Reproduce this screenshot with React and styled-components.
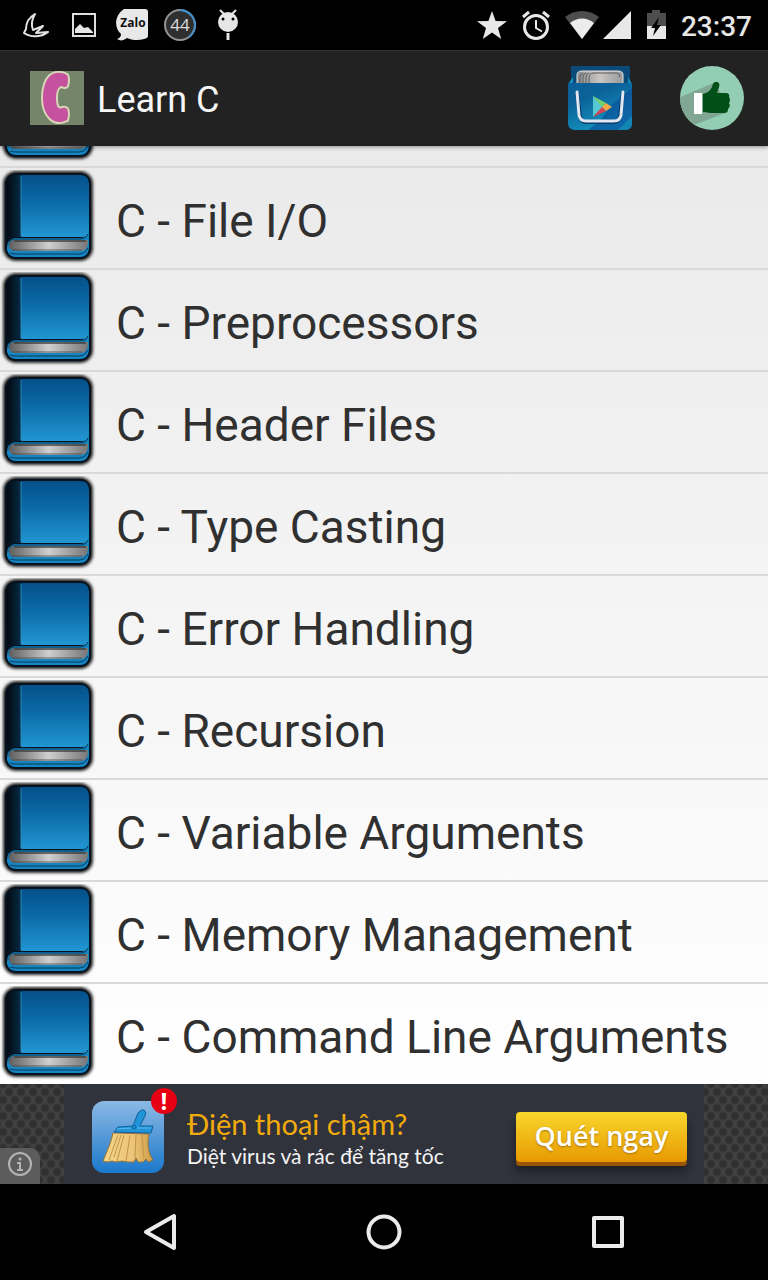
import React from "react";
import styled, { createGlobalStyle } from "styled-components";

const Global = createGlobalStyle`
  *, *::before, *::after { box-sizing: border-box; }
  body { margin: 0; background: #000; font-family: Roboto, "Liberation Sans", sans-serif; }
  button { font: inherit; border: 0; padding: 0; background: none; color: inherit; cursor: pointer; }
  svg { display: block; flex: none; }
`;

const Screen = styled.div`
  display: flex;
  flex-direction: column;
  height: 100vh;
`;

const StatusBar = styled.div`
  flex: none;
  display: flex;
  align-items: center;
  justify-content: space-between;
  height: 50px;
  padding: 0 16px 0 12px;
  background: #000;
  color: #e6e6e6;
`;

const Notifications = styled.div`
  display: grid;
  grid-auto-flow: column;
  grid-auto-columns: 48px;
  place-items: center;
`;

const StatusGroup = styled.div`
  display: flex;
  align-items: center;
  gap: ${(p) => p.$gap}px;
`;

const Clock = styled.span`
  padding-top: 4px;
  font-size: 28px;
  line-height: 32px;
  font-weight: 500;
`;

const ActionBar = styled.header`
  flex: none;
  position: relative;
  z-index: 1;
  display: flex;
  align-items: center;
  height: 96px;
  padding: 0 24px 0 30px;
  background: #222;
  box-shadow: inset 0 1px 0 #333, 0 1px 4px rgba(0, 0, 0, 0.4);
`;

const Title = styled.h1`
  flex: 1;
  margin: 0 0 0 13px;
  padding-top: 4px;
  color: #f6f6f6;
  font-size: 36px;
  line-height: 42px;
  font-weight: 400;
`;

const BarButton = styled.button`
  margin-left: 48px;
`;

const ListArea = styled.main`
  flex: 1;
  min-height: 0;
  display: flex;
  flex-direction: column;
  justify-content: flex-end;
  overflow: hidden;
  background: linear-gradient(#eaeaea, #fff);
`;

const List = styled.ul`
  margin: 0;
  padding: 0;
  list-style: none;
`;

const Item = styled.li`
  & + & { border-top: 2px solid #d9d9d9; }
`;

const Row = styled.button`
  display: flex;
  align-items: center;
  width: 100%;
  height: 100px;
  color: #303030;
  font-size: 46px;
  line-height: 54px;
  text-align: left;
`;

const RowLabel = styled.span`
  margin-left: 20px;
  padding-top: 6px;
  white-space: nowrap;
`;

const AdStrip = styled.aside`
  flex: none;
  position: relative;
  display: flex;
  justify-content: center;
  height: 100px;
  background:
    radial-gradient(circle, #303030 3px, transparent 5px) 3px 0 / 12px 16px,
    radial-gradient(circle, #303030 3px, transparent 5px) 9px 8px / 12px 16px,
    #414141;
`;

const AdBody = styled.div`
  display: flex;
  align-items: center;
  width: 640px;
  padding: 0 17px 0 28px;
  background: #30323c;
`;

const AdIcon = styled.div`
  position: relative;
  flex: none;
  width: 72px;
  height: 72px;
  margin-top: 6px;
`;

const Alert = styled.span`
  position: absolute;
  top: -13px;
  right: -13px;
  width: 26px;
  height: 26px;
  border-radius: 50%;
  background: #e60012;
  color: #fff;
  font: 700 24px/26px "Open Sans", sans-serif;
  text-align: center;
`;

const AdText = styled.div`
  flex: 1;
  margin-left: 23px;
  padding-top: 10px;
  font-family: Lato, "Noto Sans", sans-serif;
  white-space: nowrap;
`;

const AdTitle = styled.div`
  color: #f2ab0c;
  font-size: 29px;
  line-height: 34px;
`;

const AdNote = styled.div`
  color: #f4f4f4;
  font-size: 21px;
  line-height: 30px;
`;

const ScanButton = styled.button`
  && {
    flex: none;
    width: 171px;
    height: 50px;
    margin-top: 6px;
    padding-bottom: 2px;
    border-radius: 4px;
    background: linear-gradient(#f8d62c, #e89a00);
    box-shadow: 0 4px 0 #9a5608, 0 9px 8px rgba(0, 0, 0, 0.4);
    color: #fff;
    font: 600 27px/48px "Open Sans", sans-serif;
    text-shadow: 0 1px 2px rgba(120, 70, 0, 0.6);
  }
`;

const InfoButton = styled.button`
  && {
    position: absolute;
    left: 0;
    bottom: 0;
    display: flex;
    align-items: center;
    justify-content: center;
    width: 40px;
    height: 36px;
    padding-bottom: 4px;
    border-radius: 0 10px 0 0;
    background: #5c5c5c;
  }
`;

const NavBar = styled.nav`
  flex: none;
  display: flex;
  justify-content: center;
  align-items: center;
  height: 96px;
  background: #000;
`;

const NavButton = styled.button`
  && {
    display: flex;
    justify-content: center;
    width: 224px;
  }
`;

function BirdIcon() {
  return (
    <svg width="30" height="30" viewBox="0 0 30 30" fill="none" stroke="#e2e2e2" strokeWidth="2" strokeLinejoin="round">
      <path d="M14 4 C7 8 5 13 5 19 L3 23 C10 28 21 27 27 22 L15 23 L22 16 L12 20 C10 15 11 9 14 4 Z" />
    </svg>
  );
}

function PhotoIcon() {
  return (
    <svg width="24" height="24" viewBox="0 0 24 24">
      <rect x="1" y="1" width="22" height="22" fill="none" stroke="#dedede" strokeWidth="2" />
      <path d="M3 19 L3 16 L8 11 L12 15 L16 14 L21 19 L21 20 L3 20 Z" fill="#e6e6e6" />
    </svg>
  );
}

function ZaloIcon() {
  return (
    <svg width="34" height="34" viewBox="0 0 34 34">
      <path d="M9 1 H30 Q33 1 33 4 V28 Q33 30 29 31 C23 33 16 32 12 30 C8 33 5 33 2 31 Q6 30 6 26 C-1 20 -1 8 9 1 Z" fill="#e8e8e8" />
      <text x="18" y="19" textAnchor="middle" fontFamily="Open Sans, sans-serif" fontWeight="700" fontSize="12" fill="#111">Zalo</text>
    </svg>
  );
}

function CounterIcon() {
  return (
    <svg width="34" height="34" viewBox="0 0 34 34">
      <circle cx="17" cy="17" r="15" fill="#2f2f2f" stroke="#949494" strokeWidth="2" />
      <path d="M17 2 A15 15 0 0 1 26 29" fill="none" stroke="#3d8fce" strokeWidth="2" />
      <text x="17" y="23" textAnchor="middle" fontFamily="Open Sans, sans-serif" fontSize="17" fill="#dcdcdc">44</text>
    </svg>
  );
}

function DroidIcon() {
  return (
    <svg width="22" height="32" viewBox="0 0 22 32">
      <path d="M3 1 L7 5 M19 1 L15 5" stroke="#e6e6e6" strokeWidth="2" />
      <ellipse cx="11" cy="13" rx="10" ry="10" fill="#e6e6e6" />
      <circle cx="6" cy="10" r="1.5" fill="#000" />
      <circle cx="16" cy="10" r="1.5" fill="#000" />
      <rect x="9.5" y="24" width="3" height="7" fill="#e6e6e6" />
    </svg>
  );
}

function StarIcon() {
  return (
    <svg width="30" height="28" viewBox="0 0 30 28">
      <path d="M15 0 L18.600 10 L30 10.300 L21 17 L24.200 28 L15 21.500 L5.800 28 L9 17 L0 10.300 L11.400 10 Z" fill="#e8e8e8" />
    </svg>
  );
}

function AlarmIcon() {
  return (
    <svg width="28" height="30" viewBox="0 0 28 30" fill="none" stroke="#e8e8e8">
      <circle cx="14" cy="17" r="11.500" strokeWidth="3" />
      <path d="M1 7 L7 2 M27 7 L21 2" strokeWidth="3" />
      <path d="M14 10 V18 L20 21.500" strokeWidth="2" />
    </svg>
  );
}

function WifiIcon() {
  return (
    <svg width="34" height="28" viewBox="0 0 34 28">
      <path d="M0 6 C10 -2 24 -2 34 6 L17 28 Z" fill="#4d4d4d" />
      <path d="M5 12 C12 6 22 6 29 12 L17 28 Z" fill="#ececec" />
    </svg>
  );
}

function SignalIcon() {
  return (
    <svg width="28" height="28" viewBox="0 0 28 28">
      <path d="M28 0 V28 H0 Z" fill="#e8e8e8" />
    </svg>
  );
}

function BatteryIcon() {
  return (
    <svg width="20" height="30" viewBox="0 0 20 30">
      <path d="M1 3 H6 V0 H14 V3 H20 V17 H1 Z" fill="#4d4d4d" />
      <rect x="1" y="16" width="19" height="13" fill="#e8e8e8" />
      <path d="M13 7 L5 18 H9 L7 26 L15 15 H11 Z" fill="#000" />
    </svg>
  );
}

function AppLogo() {
  const c = "M37 4 Q39 9 37 15 Q35 17 32 15 C28 15 26 20 26 27 C26 35 28 39 32 37 Q35 36 37 38 Q39 43 37 49 C31 52 25 52 20 47 C15 42 13 35 13 27 C13 18 15 10 20 5 C25 1 31 1 37 4 Z";
  return (
    <svg width="54" height="54" viewBox="0 0 54 54">
      <rect width="54" height="54" fill="#75856a" />
      <path d={c} fill="none" stroke="#d9d6b8" strokeWidth="4" strokeLinejoin="round" />
      <path d={c} fill="#c6529f" />
    </svg>
  );
}

function StoreIcon() {
  return (
    <svg width="64" height="64" viewBox="0 0 64 64">
      <defs>
        <linearGradient id="bag" x1="0" y1="0" x2="0.4" y2="1">
          <stop offset="0" stopColor="#0c5f98" />
          <stop offset="0.5" stopColor="#0b6199" />
          <stop offset="1" stopColor="#1391bd" />
        </linearGradient>
        <linearGradient id="cards" x1="0" y1="0" x2="1" y2="0">
          <stop offset="0" stopColor="#8e8e8e" />
          <stop offset="0.5" stopColor="#c9c6c4" />
          <stop offset="1" stopColor="#9a9a9a" />
        </linearGradient>
        <clipPath id="bagShape"><path d="M0 17 H64 V57 Q64 64 57 64 H7 Q0 64 0 57 Z" /></clipPath>
      </defs>
      <rect x="3" y="0" width="59" height="24" fill="#0a4a78" />
      <path d="M0 18 L5 11 V18 Z M64 18 L60 11 V18 Z" fill="#118fc0" />
      <path d="M9 18 V9 Q9 5 14 5 H50 Q55 5 55 9 V18 Z" fill="url(#cards)" stroke="#e4e4e4" />
      <path d="M12 18 V11 Q12 8 15 7 M15 18 V11 Q15 8 18 7 M18 18 V11 Q18 8 21 7 M21 18 V12 Q21 7 26 7 H49 Q52 8 52 11" fill="none" stroke="#5d5d5d" />
      <g clipPath="url(#bagShape)">
        <rect width="64" height="64" fill="url(#bag)" />
        <path d="M43 39 L64 22 V64 H20 L32 55 Z" fill="#0a4a98" opacity="0.6" />
        <path d="M50 64 L64 50 V64 Z" fill="#1793b8" opacity="0.7" />
      </g>
      <path d="M9 27 L12 50 Q13 56 18 56 H46 Q51 56 52 50 L55 27" fill="none" stroke="#093e6c" strokeWidth="4" strokeLinecap="round" />
      <path d="M9 26 L11 49 Q12 55 18 55 H46 Q52 55 53 49 L55 26" fill="none" stroke="#e2e5f2" strokeWidth="3" strokeLinecap="round" />
      <path d="M25 30 L35 41 L25 51 Z" fill="#55c8d4" />
      <path d="M25 30 L38 37 L34 41 Z" fill="#75d06f" />
      <path d="M38 37 L44 41 L38 45 L34 41 Z" fill="#f4a944" />
      <path d="M25 51 L34 41 L38 45 Z" fill="#d84455" />
    </svg>
  );
}

function LikeIcon() {
  return (
    <svg width="64" height="64" viewBox="0 0 64 64">
      <defs>
        <clipPath id="disc"><circle cx="32" cy="32" r="32" /></clipPath>
      </defs>
      <circle cx="32" cy="32" r="32" fill="#93cdb4" />
      <path clipPath="url(#disc)" d="M36 16 L-2 32 L6 62 L48 46 Z" fill="#7fa794" />
      <rect x="14" y="27" width="8" height="21" fill="#fff" />
      <path d="M23 28 C27 27 30 25 32 21 C33 17 34 16 36 16 C39 16 40 18 39 21 L37 27 H47 Q50 28 49 31 Q51 34 49 37 Q51 40 48 43 Q48 47 44 47 H30 Q26 46 23 46 Z" fill="#034f18" />
    </svg>
  );
}

function BookDefs() {
  return (
    <svg width="0" height="0" style={{ position: "absolute" }} aria-hidden="true">
      <defs>
        <linearGradient id="cover" x1="0" y1="0" x2="0" y2="1">
          <stop offset="0" stopColor="#04508a" />
          <stop offset="0.4" stopColor="#0a68a4" />
          <stop offset="1" stopColor="#2196d3" />
        </linearGradient>
        <linearGradient id="spine" x1="0" y1="0" x2="1" y2="0">
          <stop offset="0" stopColor="#020a12" />
          <stop offset="1" stopColor="#062b45" />
        </linearGradient>
        <linearGradient id="pages" x1="0" y1="0" x2="1" y2="0">
          <stop offset="0" stopColor="#5e5e5e" />
          <stop offset="0.5" stopColor="#cfcfcf" />
          <stop offset="1" stopColor="#777" />
        </linearGradient>
        <filter id="soft" x="-10%" y="-10%" width="120%" height="120%"><feGaussianBlur stdDeviation="1.500" /></filter>
      </defs>
    </svg>
  );
}

function BookIcon() {
  return (
    <svg width="96" height="96" viewBox="0 0 96 96">
      <rect x="3" y="1" width="90" height="90" rx="13" fill="#222" filter="url(#soft)" />
      <rect x="5" y="3" width="86" height="86" rx="11" fill="#06121d" />
      <path d="M21 5 H80 Q89 5 89 14 V62 Q88 67 82 67 H21 Z" fill="url(#cover)" />
      <path d="M7 15 Q7 5 15 5 H21 V67 H7 Z" fill="url(#spine)" />
      <path d="M21 6 V66" stroke="#2d87b8" />
      <path d="M7 78 V80 Q9 87 16 87 H80 Q88 87 89 78 V62 Q86 68 80 68 H14 Q7 70 7 78 Z" fill="#1785c2" />
      <path d="M9 76 Q9 69 15 69 H80 Q86 69 88 64" fill="none" stroke="#0b3a58" />
      <path d="M10 83 Q13 84 16 84 H80 Q85 84 88 78" fill="none" stroke="#0b3a58" />
      <path d="M14 70 H88 V73 Q87 81 80 81 H15 Q9 80 9 75 Q9 71 14 70 Z" fill="url(#pages)" />
      <path d="M14 71 H86" stroke="#3a3a3a" strokeWidth="2" opacity="0.7" />
      <path d="M12 80 H82" stroke="#444" strokeWidth="2" opacity="0.4" />
    </svg>
  );
}

function BroomIcon() {
  return (
    <svg width="72" height="72" viewBox="0 0 72 72">
      <defs>
        <linearGradient id="tile" x1="0" y1="0" x2="0" y2="1">
          <stop offset="0" stopColor="#8cb9e4" />
          <stop offset="1" stopColor="#1b78cb" />
        </linearGradient>
        <linearGradient id="straw" x1="0" y1="0" x2="1" y2="0">
          <stop offset="0" stopColor="#f3d58a" />
          <stop offset="0.6" stopColor="#ecc477" />
          <stop offset="1" stopColor="#cf9c48" />
        </linearGradient>
      </defs>
      <rect width="72" height="72" rx="12" fill="url(#tile)" />
      <path d="M21 32 C19 42 15 50 11 60 L15 61 L20 60 L24 61 L30 60 L36 61 L42 61 L44 57 L46 61 L51 61 L54 58 L56 61 L61 59 C56 52 55 42 57 33 Z" fill="url(#straw)" stroke="#9a7336" />
      <path d="M26 34 L17 59 M32 34 L25 60 M38 34 L34 60 M44 34 L43 57 M50 34 L52 58 M29 34 L22 56" stroke="#c3954a" fill="none" />
      <path d="M22 31 L26 26 L41 25 L46 12 Q49 8 52 9 Q55 11 53 15 L48 25 L61 25 L59 32 Z" fill="#2195d8" stroke="#12609a" strokeLinejoin="round" />
      <path d="M25 28 L39 27 M45 27 L59 27" stroke="#59bced" />
      <circle cx="42" cy="26" r="2" fill="#1b86c8" stroke="#0f69a8" />
    </svg>
  );
}

function InfoIcon() {
  return (
    <svg width="24" height="24" viewBox="0 0 24 24">
      <circle cx="12" cy="12" r="11" fill="none" stroke="#b4b4b4" strokeWidth="2" />
      <circle cx="12" cy="7" r="1.500" fill="#b4b4b4" />
      <path d="M9 11 H12 V18 M9 18 H15" fill="none" stroke="#b4b4b4" strokeWidth="2" />
    </svg>
  );
}

const chapters = [
  "C - File I/O",
  "C - Preprocessors",
  "C - Header Files",
  "C - Type Casting",
  "C - Error Handling",
  "C - Recursion",
  "C - Variable Arguments",
  "C - Memory Management",
  "C - Command Line Arguments",
];

const navShapes = [
  { name: "Back", shape: <path d="M34 5 V37 L6 21 Z" /> },
  { name: "Home", shape: <circle cx="20" cy="21" r="15.500" /> },
  { name: "Recent apps", shape: <rect x="6" y="7" width="28" height="28" /> },
];

export default function App() {
  return (
    <Screen>
      <Global />
      <BookDefs />
      <StatusBar>
        <Notifications>
          <BirdIcon />
          <PhotoIcon />
          <ZaloIcon />
          <CounterIcon />
          <DroidIcon />
        </Notifications>
        <StatusGroup $gap={15}>
          <StarIcon />
          <AlarmIcon />
          <StatusGroup $gap={4}>
            <WifiIcon />
            <SignalIcon />
          </StatusGroup>
          <BatteryIcon />
          <Clock>23:37</Clock>
        </StatusGroup>
      </StatusBar>
      <ActionBar>
        <AppLogo />
        <Title>Learn C</Title>
        <BarButton aria-label="More apps"><StoreIcon /></BarButton>
        <BarButton aria-label="Like"><LikeIcon /></BarButton>
      </ActionBar>
      <ListArea>
        <List>
          <Item><Row aria-label="Previous chapter"><BookIcon /></Row></Item>
          {chapters.map((name) => (
            <Item key={name}>
              <Row><BookIcon /><RowLabel>{name}</RowLabel></Row>
            </Item>
          ))}
        </List>
      </ListArea>
      <AdStrip>
        <AdBody>
          <AdIcon><BroomIcon /><Alert>!</Alert></AdIcon>
          <AdText>
            <AdTitle>Điện thoại chậm?</AdTitle>
            <AdNote>Diệt virus và rác để tăng tốc</AdNote>
          </AdText>
          <ScanButton>Quét ngay</ScanButton>
        </AdBody>
        <InfoButton aria-label="About this ad"><InfoIcon /></InfoButton>
      </AdStrip>
      <NavBar>
        {navShapes.map(({ name, shape }) => (
          <NavButton key={name} aria-label={name}>
            <svg width="40" height="42" viewBox="0 0 40 42" fill="none" stroke="#ebebeb" strokeWidth="4" strokeLinejoin="round">{shape}</svg>
          </NavButton>
        ))}
      </NavBar>
    </Screen>
  );
}
